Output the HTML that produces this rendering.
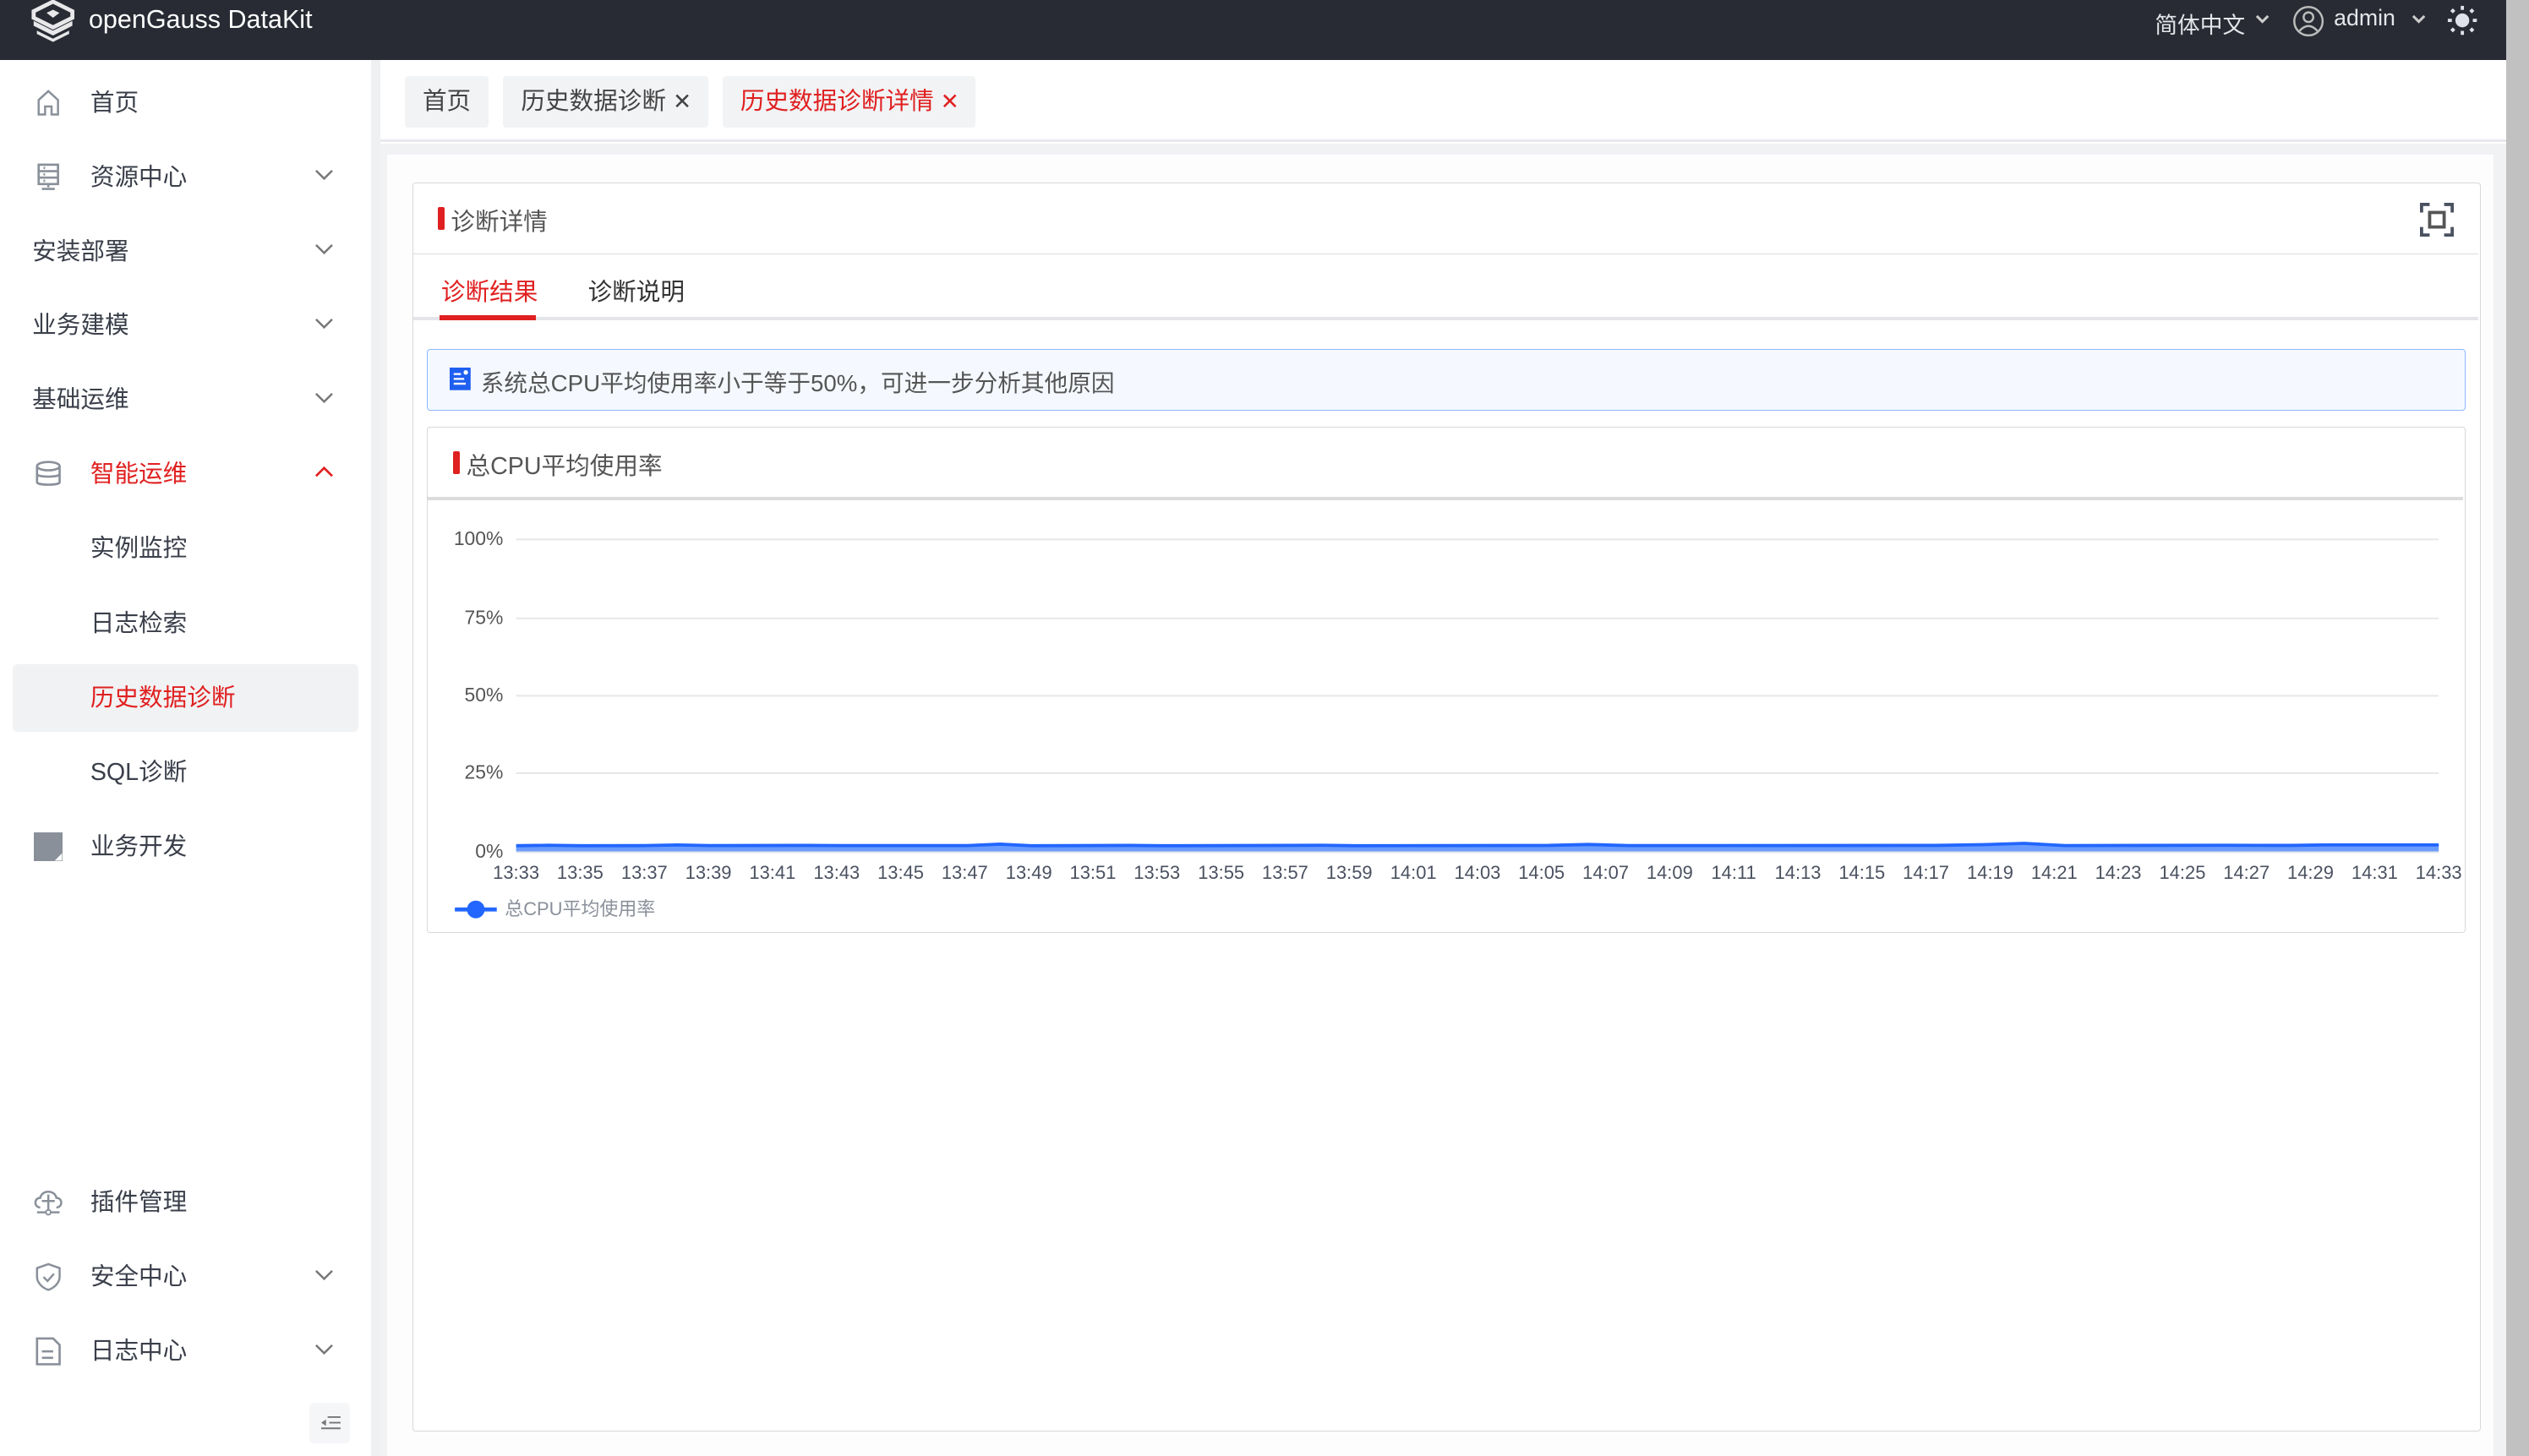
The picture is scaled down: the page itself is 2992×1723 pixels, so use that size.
<!DOCTYPE html>
<html><head><meta charset="utf-8"><style>
*{margin:0;padding:0;box-sizing:border-box}
html,body{width:2992px;height:1723px;overflow:hidden;background:#fff}
#z{zoom:1.9082;width:1568px;height:903px;position:relative;font-family:"Liberation Sans","Noto Sans CJK SC",sans-serif;color:#333}
.a{position:absolute}
.hd{left:0;top:0;width:1554px;height:37px;background:#282b33;color:#fff}
.sb{left:0;top:37px;width:230px;height:866px;background:#fff}
.sbb{left:230px;top:37px;width:6px;height:866px;background:#eff0f2}
.mi{position:absolute;left:0;width:222px;height:42px;font-size:15px;color:#3a3f4a;line-height:42px}
.mi .t{position:absolute;left:56px}
.mi .t0{position:absolute;left:20px}
.mi .ic{position:absolute;left:21px;top:12px;width:18px;height:18px}
.mi .ch{position:absolute;left:195px;top:15px;width:12px;height:10px}
.tab{position:absolute;top:47px;height:32px;background:#f2f3f5;border-radius:2px;font-size:15px;line-height:32px;padding-left:11px;color:#444}
</style></head><body><div id="z">
<div class="a hd">
 <svg class="a" style="left:19px;top:0" width="28" height="26" viewBox="0 0 28 26"><path d="M14 1 L26 7 L26 11 L14 17 L2 11 L2 7 Z" fill="none" stroke="#e8e8ea" stroke-width="2.5"/><path d="M2 13 L14 19 L26 13 L26 16 L14 22 L2 16Z" fill="#e8e8ea"/><path d="M4 19 L14 24 L24 19 L24 21 L14 26 L4 21Z" fill="#e8e8ea"/><path d="M10 8 L14 6 L18 8 L14 11Z" fill="#e8e8ea"/></svg>
 <div class="a" style="left:55px;top:3px;font-size:16px;color:#fff">openGauss DataKit</div>
 <div class="a" style="left:1336px;top:4px;font-size:14px;color:#e4e6ea">简体中文</div>
 <svg class="a" style="left:1398px;top:9px" width="9" height="6"><path d="M1 1 L4.5 4.5 L8 1" stroke="#ccc" stroke-width="1.6" fill="none"/></svg>
 <svg class="a" style="left:1421px;top:3px" width="20" height="20" viewBox="0 0 20 20"><circle cx="10" cy="10" r="8.8" fill="none" stroke="#bbb" stroke-width="1.3"/><circle cx="10" cy="7.5" r="3" fill="none" stroke="#bbb" stroke-width="1.3"/><path d="M4.5 16 Q10 10 15.5 16" fill="none" stroke="#bbb" stroke-width="1.3"/></svg>
 <div class="a" style="left:1447px;top:3px;font-size:14px;color:#e4e6ea">admin</div>
 <svg class="a" style="left:1495px;top:9px" width="9" height="6"><path d="M1 1 L4.5 4.5 L8 1" stroke="#ccc" stroke-width="1.6" fill="none"/></svg>
 <svg class="a" style="left:1517px;top:3px" width="19" height="19" viewBox="0 0 19 19"><circle cx="9.5" cy="9.5" r="4.3" fill="#dfe2ea"/><g fill="#dfe2ea"><rect x="8.5" y="0.5" width="2" height="2.5"/><rect x="8.5" y="16" width="2" height="2.5"/><rect x="0.5" y="8.5" width="2.5" height="2"/><rect x="16" y="8.5" width="2.5" height="2"/><rect x="2.5" y="2.5" width="2.2" height="2.2" transform="rotate(45 3.6 3.6)"/><rect x="14.3" y="2.5" width="2.2" height="2.2" transform="rotate(45 15.4 3.6)"/><rect x="2.5" y="14.3" width="2.2" height="2.2" transform="rotate(45 3.6 15.4)"/><rect x="14.3" y="14.3" width="2.2" height="2.2" transform="rotate(45 15.4 15.4)"/></g></svg>
</div>
<div class="a" style="left:1554px;top:0;width:14px;height:903px;background:#c1c1c1"></div>
<div class="a sb">
 <div class="mi" style="top:6px"><svg class="ic" viewBox="0 0 18 18"><path d="M3 16 V7 L9 1.5 L15 7 V16 H11 V11 H7 V16Z" fill="none" stroke="#8a909a" stroke-width="1.3"/></svg><span class="t">首页</span></div>
 <div class="mi" style="top:52px"><svg class="ic" viewBox="0 0 18 18"><rect x="3" y="1" width="12" height="12" fill="none" stroke="#8a909a" stroke-width="1.4"/><path d="M3 5H15M3 9H15M6 3h1M6 7h1M6 11h1M9 13v2M5 16h8" stroke="#8a909a" stroke-width="1.4"/></svg><span class="t">资源中心</span><svg class="ch"><path d="M1 2 L6 7 L11 2" stroke="#777" stroke-width="1.3" fill="none"/></svg></div>
 <div class="mi" style="top:98px"><span class="t0">安装部署</span><svg class="ch"><path d="M1 2 L6 7 L11 2" stroke="#777" stroke-width="1.3" fill="none"/></svg></div>
 <div class="mi" style="top:144px"><span class="t0">业务建模</span><svg class="ch"><path d="M1 2 L6 7 L11 2" stroke="#777" stroke-width="1.3" fill="none"/></svg></div>
 <div class="mi" style="top:190px"><span class="t0">基础运维</span><svg class="ch"><path d="M1 2 L6 7 L11 2" stroke="#777" stroke-width="1.3" fill="none"/></svg></div>
 <div class="mi" style="top:236px;color:#e02020"><svg class="ic" viewBox="0 0 18 18"><ellipse cx="9" cy="4" rx="7" ry="2.6" fill="none" stroke="#8a909a" stroke-width="1.4"/><path d="M2 4V14C2 16 16 16 16 14V4M2 9C2 11 16 11 16 9" fill="none" stroke="#8a909a" stroke-width="1.4"/></svg><span class="t">智能运维</span><svg class="ch"><path d="M1 7 L6 2 L11 7" stroke="#e02020" stroke-width="1.4" fill="none"/></svg></div>
 <div class="mi" style="top:282px"><span class="t">实例监控</span></div>
 <div class="mi" style="top:329px"><span class="t">日志检索</span></div>
 <div class="mi" style="top:375px;left:8px;width:214px;background:#f1f2f4;border-radius:3px;color:#e02020"><span class="t" style="left:48px">历史数据诊断</span></div>
 <div class="mi" style="top:421px"><span class="t">SQL诊断</span></div>
 <div class="mi" style="top:467px"><svg class="ic" viewBox="0 0 18 18"><rect x="0.5" y="0.5" width="17" height="17" fill="#8a909a" stroke="#8a909a"/><path d="M13 17.5 L17.5 13 L17.5 17.5Z" fill="#fff"/></svg><span class="t">业务开发</span></div>
 <div class="mi" style="top:688px"><svg class="ic" viewBox="0 0 18 18"><path d="M4 12 C0 12 0 6 4 6 C5 1 13 1 14 6 C18 6 18 12 14 12" fill="none" stroke="#8a909a" stroke-width="1.3"/><path d="M9 4V15M5 8H13M2 15H16" stroke="#8a909a" stroke-width="1.3"/><circle cx="9" cy="15" r="1.5" fill="#fff" stroke="#8a909a"/></svg><span class="t">插件管理</span></div>
 <div class="mi" style="top:734px"><svg class="ic" viewBox="0 0 18 18"><path d="M9 1 L16 3.5 V9 C16 13 12 16 9 17 C6 16 2 13 2 9 V3.5Z" fill="none" stroke="#8a909a" stroke-width="1.3"/><path d="M6 9 L8.5 11.5 L12.5 7" stroke="#8a909a" stroke-width="1.3" fill="none"/></svg><span class="t">安全中心</span><svg class="ch"><path d="M1 2 L6 7 L11 2" stroke="#777" stroke-width="1.3" fill="none"/></svg></div>
 <div class="mi" style="top:780px"><svg class="ic" viewBox="0 0 18 18"><path d="M2 1 H12 L16 5 V17 H2Z" fill="none" stroke="#8a909a" stroke-width="1.4"/><path d="M5 9H12M5 13H12" stroke="#8a909a" stroke-width="1.4"/></svg><span class="t">日志中心</span><svg class="ch"><path d="M1 2 L6 7 L11 2" stroke="#777" stroke-width="1.3" fill="none"/></svg></div>
 <div class="a" style="left:192px;top:833px;width:25px;height:25px;background:#f5f6f8;border-radius:3px"><svg class="a" style="left:7px;top:8px" width="12" height="9"><path d="M4 1H12M5 4.5H12M0 8H12" stroke="#777" stroke-width="1"/><path d="M0 4.5 L3 2.5 V6.5Z" fill="#777"/></svg></div>
</div>
<div class="a sbb"></div>
<div class="a" style="left:236px;top:37px;width:1318px;height:51px;background:#fff;border-bottom:2px solid #e8e9ec"></div>
<div class="tab" style="left:251px;width:52px">首页</div>
<div class="tab" style="left:312px;width:127px">历史数据诊断 <span style="font-size:14px">✕</span></div>
<div class="tab" style="left:448px;width:157px;color:#e02020">历史数据诊断详情 <span style="font-size:14px">✕</span></div>
<div class="a" style="left:236px;top:89px;width:1318px;height:814px;background:#f1f2f4"></div>
<div class="a" style="left:240px;top:96px;width:1306px;height:807px;background:#fdfdfd"></div>
<div class="a" style="left:256px;top:113px;width:1282px;height:775px;border:1px solid #d8d8d8;background:#fff;border-radius:2px">
 <div class="a" style="left:0;top:0;width:1280px;height:44px;border-bottom:1px solid #dcdcdc"></div>
 <div class="a" style="left:15px;top:15px;width:4px;height:14px;background:#e02020;border-radius:1px"></div>
 <div class="a" style="left:23px;top:12px;font-size:15px;color:#555">诊断详情</div>
 <svg class="a" style="left:1244px;top:12px" width="21" height="21" viewBox="0 0 21 21"><path d="M1 6V1H6M15 1H20V6M20 15V20H15M6 20H1V15" fill="none" stroke="#4a5160" stroke-width="2"/><rect x="6" y="6" width="9" height="9" fill="none" stroke="#555" stroke-width="2"/></svg>
 <div class="a" style="left:0;top:83px;width:1280px;height:2px;background:#e4e5ea"></div>
 <div class="a" style="left:17px;top:56px;font-size:15px;color:#e02020">诊断结果</div>
 <div class="a" style="left:16px;top:82px;width:60px;height:3px;background:#e02020"></div>
 <div class="a" style="left:108px;top:56px;font-size:15px;color:#333">诊断说明</div>
 <div class="a" style="left:8px;top:103px;width:1264px;height:38px;background:#f5f9ff;border:1px solid #8cb8ff;border-radius:2px">
  <svg class="a" style="left:14px;top:11px" width="13" height="14" viewBox="0 0 13 14"><rect width="13" height="14" fill="#1f5ff0"/><path d="M2.5 4H7M2.5 7H9M2.5 10H10" stroke="#fff" stroke-width="1.2"/><circle cx="10" cy="3" r="1.4" fill="#fff"/></svg>
  <div class="a" style="left:33px;top:9px;font-size:14.5px;color:#555">系统总CPU平均使用率小于等于50%，可进一步分析其他原因</div>
 </div>
 <div class="a" style="left:8px;top:151px;width:1264px;height:314px;border:1px solid #d8d8d8;border-radius:2px;background:#fff">
  <div class="a" style="left:0;top:43px;width:1262px;height:2px;background:#dcdcdc"></div>
  <div class="a" style="left:16px;top:15px;width:4px;height:14px;background:#e02020;border-radius:1px"></div>
  <div class="a" style="left:24px;top:12px;font-size:15px;color:#555">总CPU平均使用率</div>
 </div>
</div>
<svg class="a" style="left:0;top:0" width="1568" height="903" viewBox="0 0 1568 903" font-family="Liberation Sans, sans-serif">
 <g stroke="#e6e6e6" stroke-width="1"><line x1="320" y1="334.5" x2="1512" y2="334.5"/><line x1="320" y1="383.5" x2="1512" y2="383.5"/><line x1="320" y1="431.5" x2="1512" y2="431.5"/><line x1="320" y1="479.5" x2="1512" y2="479.5"/><line x1="320" y1="528" x2="1512" y2="528" stroke="#e0e2e8" stroke-width="2"/></g>
 <g font-size="12" fill="#555" text-anchor="end"><text x="312" y="338">100%</text><text x="312" y="387">75%</text><text x="312" y="435">50%</text><text x="312" y="483">25%</text><text x="312" y="532">0%</text></g>
 <path d="M320 524.5 L340 524.2 L360 524.5 L400 524.4 L420 524 L440 524.4 L500 524.3 L520 524.4 L600 524.4 L620 523.5 L640 524.5 L700 524.3 L720 524.5 L800 524.3 L820 524.2 L840 524.5 L960 524.3 L985 523.7 L1010 524.4 L1200 524.3 L1230 523.8 L1255 523 L1280 524.4 L1380 524.2 L1420 524.3 L1440 524 L1512 524 L1512 528 L320 528Z" fill="#6a9cff"/>
 <path d="M320 524.5 L340 524.2 L360 524.5 L400 524.4 L420 524 L440 524.4 L500 524.3 L520 524.4 L600 524.4 L620 523.5 L640 524.5 L700 524.3 L720 524.5 L800 524.3 L820 524.2 L840 524.5 L960 524.3 L985 523.7 L1010 524.4 L1200 524.3 L1230 523.8 L1255 523 L1280 524.4 L1380 524.2 L1420 524.3 L1440 524 L1512 524" fill="none" stroke="#2266ff" stroke-width="2"/>
 <g font-size="11.5" fill="#4a5160" text-anchor="middle">
<text x="320" y="545">13:33</text><text x="359.7" y="545">13:35</text><text x="399.5" y="545">13:37</text><text x="439.2" y="545">13:39</text><text x="478.9" y="545">13:41</text><text x="518.7" y="545">13:43</text><text x="558.4" y="545">13:45</text><text x="598.1" y="545">13:47</text><text x="637.9" y="545">13:49</text><text x="677.6" y="545">13:51</text><text x="717.3" y="545">13:53</text><text x="757.1" y="545">13:55</text><text x="796.8" y="545">13:57</text><text x="836.5" y="545">13:59</text><text x="876.3" y="545">14:01</text><text x="916" y="545">14:03</text><text x="955.7" y="545">14:05</text><text x="995.5" y="545">14:07</text><text x="1035.2" y="545">14:09</text><text x="1074.9" y="545">14:11</text><text x="1114.7" y="545">14:13</text><text x="1154.4" y="545">14:15</text><text x="1194.1" y="545">14:17</text><text x="1233.9" y="545">14:19</text><text x="1273.6" y="545">14:21</text><text x="1313.3" y="545">14:23</text><text x="1353.1" y="545">14:25</text><text x="1392.8" y="545">14:27</text><text x="1432.5" y="545">14:29</text><text x="1472.3" y="545">14:31</text><text x="1512" y="545">14:33</text></g>
 <line x1="282" y1="564" x2="308" y2="564" stroke="#2266ff" stroke-width="2.5"/><ellipse cx="295" cy="564" rx="5.5" ry="5.5" fill="#2266ff"/>
 <text x="313" y="567.5" font-size="11.5" fill="#8a909a" font-family="Liberation Sans, Noto Sans CJK SC, sans-serif">总CPU平均使用率</text>
</svg>
</div></body></html>
